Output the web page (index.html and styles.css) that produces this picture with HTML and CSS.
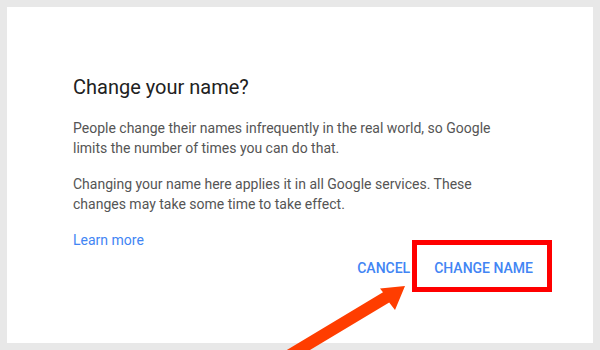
FILE: index.html
```html
<!DOCTYPE html>
<html lang="en">
<head>
  <meta charset="UTF-8">
  <meta name="viewport" content="width=device-width, initial-scale=1.0">
  <title>Change your name?</title>
  <link rel="stylesheet" href="styles.css">
</head>
<body>
  <div class="dialogBox">
    <h2 class="dialogTitle">Change your name?</h2>
    <p class="dialogText">People change their names infrequently in the real world, so Google limits the number of times you can do that.</p>
    <p class="dialogText">Changing your name here applies it in all Google services. These changes may take some time to take effect.</p>
    <p class="learnRow"><a class="learnLink" href="#">Learn more</a></p>
    <div class="dialogActions">
      <button class="flatButton" type="button">Cancel</button>
      <button class="flatButton marked" type="button">Change name</button>
    </div>
  </div>

  <!-- annotation arrow drawn over the screenshot -->
  <svg class="pointerArrow" width="600" height="350" viewBox="0 0 600 350">
    <polygon fill="#ff3d00" points="405,286 395,310 389.2,302.4 217.8,405.4 211.6,395.2 383,292.2 380,288.5" />
  </svg>
</body>
</html>
```

FILE: styles.css
```css
html, body {
  margin: 0;
  height: 100%;
}
body {
  position: relative;
  box-sizing: border-box;
  padding: 7px;
  background-color: #e8e8e8;
  font-family: Roboto, "Liberation Sans", sans-serif;
  overflow: hidden;
}
.dialogBox {
  box-sizing: border-box;
  height: 336px;
  padding: 66px 52px 0 66px;
  background-color: #ffffff;
}
.dialogTitle {
  margin: 0 0 17px;
  font-size: 20px;
  line-height: 28px;
  font-weight: 400;
  color: #212121;
}
.dialogText {
  max-width: 440px;
  margin: 0 0 16px;
  font-size: 14px;
  line-height: 20px;
  color: #555555;
}
.learnRow {
  margin: 0;
  font-size: 14px;
  line-height: 20px;
}
.learnLink {
  color: #4285f4;
  text-decoration: none;
}
.dialogActions {
  display: flex;
  justify-content: flex-end;
  gap: 8px;
}
.flatButton {
  position: relative;
  height: 36px;
  padding: 0 8px;
  border: 0;
  background: none;
  font-family: Roboto, "Liberation Sans", sans-serif;
  font-size: 14px;
  font-weight: 500;
  line-height: 36px;
  text-transform: uppercase;
  color: #4285f4;
}
.marked::after {
  content: "";
  position: absolute;
  left: -14px;
  right: -11px;
  top: -10px;
  bottom: -6px;
  border: 5px solid #ff0000;
}
.pointerArrow {
  position: absolute;
  left: 0;
  top: 0;
  pointer-events: none;
}
```
